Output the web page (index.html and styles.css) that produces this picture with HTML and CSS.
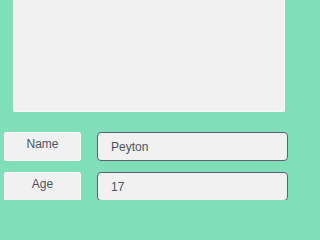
FILE: index.html
```html
<!DOCTYPE html>
<html>
<head>
<meta charset="utf-8">
<link rel="stylesheet" href="styles.css">
</head>
<body>
<div class="panel"></div>
<div class="form">
  <div class="row">
    <div class="label">Name</div>
    <div class="field">Peyton</div>
  </div>
  <div class="row">
    <div class="label">Age</div>
    <div class="field">17</div>
  </div>
</div>
</body>
</html>
```
FILE: styles.css
```css
html, body {
  margin: 0;
  padding: 0;
  width: 300px;
  height: 200px;
  overflow: hidden;
  background: #80dfb9;
  font-family: "Liberation Sans", Arial, sans-serif;
  font-size: 12px;
  color: #4b5363;
}
.panel {
  margin: 0 15px 0 13px;
  height: 111px;
  background: #f1f1f1;
  border: 1px solid #f7f7f7;
  border-top: none;
  border-radius: 0 0 2px 2px;
}
.form {
  display: flex;
  flex-direction: column;
  gap: 11px;
  padding: 20px 12px 0 4px;
}
.row {
  display: flex;
  gap: 16px;
  height: 29px;
}
.label {
  box-sizing: border-box;
  width: 77px;
  height: 29px;
  padding-top: 4px;
  line-height: 14px;
  text-align: center;
  background: #f1f1f1;
  border: 1px solid #f8f8f8;
  border-radius: 2px;
}
.field {
  box-sizing: border-box;
  flex: 1;
  height: 29px;
  padding: 7px 13px 0;
  line-height: 14px;
  background: #f1f1f1;
  border: 1px solid #5b6070;
  border-radius: 4px;
}
```
